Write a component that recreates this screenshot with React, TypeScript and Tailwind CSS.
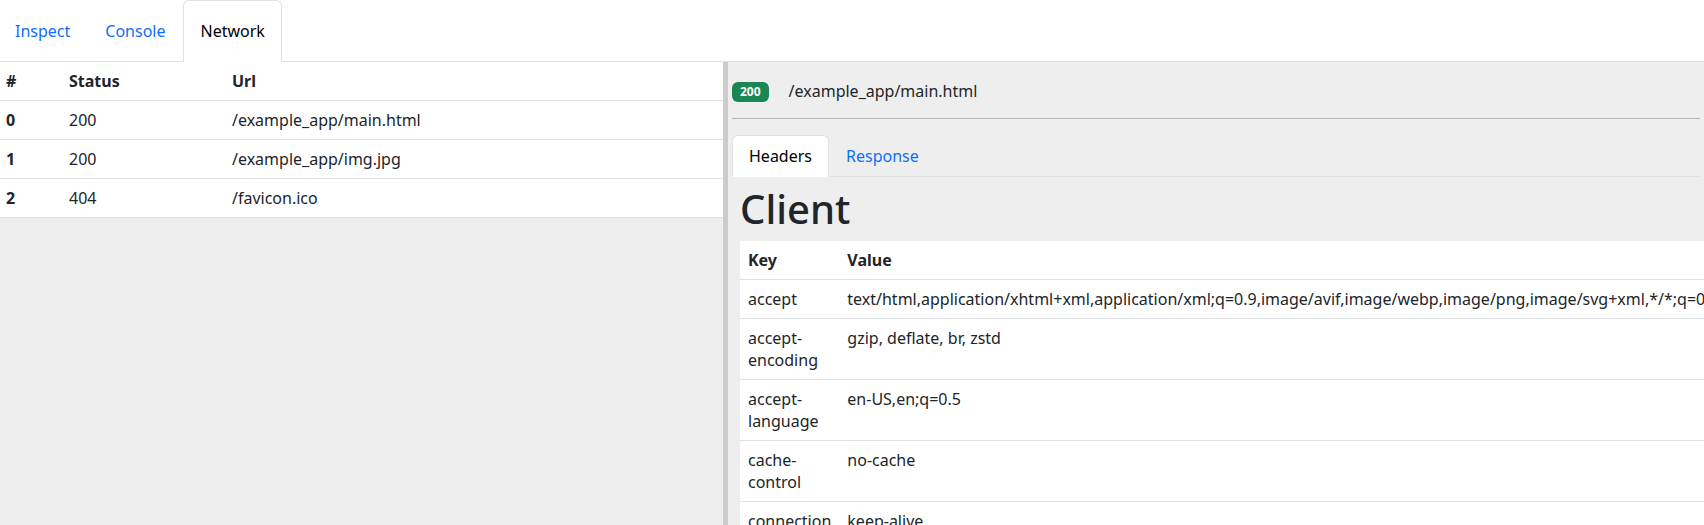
import React, { useState } from 'react';

type Request = {
  id: number;
  status: number;
  url: string;
};

const requests: Request[] = [
  { id: 0, status: 200, url: '/example_app/main.html' },
  { id: 1, status: 200, url: '/example_app/img.jpg' },
  { id: 2, status: 404, url: '/favicon.ico' },
];

const headers: [string, string][] = [
  [
    'accept',
    'text/html,application/xhtml+xml,application/xml;q=0.9,image/avif,image/webp,image/png,image/svg+xml,*/*;q=0.8',
  ],
  ['accept-encoding', 'gzip, deflate, br, zstd'],
  ['accept-language', 'en-US,en;q=0.5'],
  ['cache-control', 'no-cache'],
  ['connection', 'keep-alive'],
  ['host', 'localhost:8000'],
  ['pragma', 'no-cache'],
];

function TopTabs({ active, onSelect }: { active: string; onSelect: (t: string) => void }) {
  const tabs = ['Inspect', 'Console', 'Network'];
  return (
    <div className="flex h-[62px] shrink-0 border-b border-[#dee2e6] bg-white">
      <div className="-ml-[2px] flex gap-px">
        {tabs.map((t) => (
          <button
            key={t}
            onClick={() => onSelect(t)}
            className={`-mb-px h-[62px] rounded-t-[6px] border px-4 text-[16px] leading-[22px] ${
              active === t
                ? 'border-[#dee2e6] border-b-white bg-white text-black'
                : 'border-transparent text-[#0d6efd]'
            }`}
          >
            {t}
          </button>
        ))}
      </div>
    </div>
  );
}

function RequestList() {
  return (
    <div className="w-[723px] shrink-0 bg-[#eeeeee]">
      <table className="w-full border-collapse bg-white text-left text-[16px] leading-[22px] text-[#212529]">
        <thead>
          <tr className="border-b border-[#dee2e6]">
            <th className="w-[63px] px-[6px] py-2 font-bold">#</th>
            <th className="w-[163px] px-[6px] py-2 font-bold">Status</th>
            <th className="px-[6px] py-2 font-bold">Url</th>
          </tr>
        </thead>
        <tbody>
          {requests.map((r) => (
            <tr key={r.id} className="border-b border-[#dee2e6]">
              <th className="px-[6px] py-2 font-bold">{r.id}</th>
              <td className="px-[6px] py-2">{r.status}</td>
              <td className="px-[6px] py-2">{r.url}</td>
            </tr>
          ))}
        </tbody>
      </table>
    </div>
  );
}

function RequestDetail() {
  const [tab, setTab] = useState('Headers');
  return (
    <div className="min-w-0 flex-1 overflow-hidden bg-[#eeeeee] p-1 text-[#212529]">
      <div className="flex h-[52px] items-center gap-5">
        <span className="rounded-[6px] bg-[#198754] px-[8px] py-[4px] text-[12px] leading-[12px] font-bold text-white">
          200
        </span>
        <span className="-mt-[2px] text-[16px] leading-[22px]">/example_app/main.html</span>
      </div>
      <div className="h-px bg-[#b8b8b8]" />
      <div className="mt-[16px] flex border-b border-[#dee2e6]">
        {['Headers', 'Response'].map((t) => (
          <button
            key={t}
            onClick={() => setTab(t)}
            className={`-mb-px h-[42px] rounded-t-[6px] border px-4 text-[16px] leading-[22px] ${
              tab === t
                ? 'border-[#dee2e6] border-b-white bg-white text-black'
                : 'border-transparent text-[#0d6efd]'
            }`}
          >
            {t}
          </button>
        ))}
      </div>
      <div className="px-2 pt-2">
        <h1 className="mb-2 text-[40px] leading-[48px] font-medium text-[#212529]">Client</h1>
        <table className="border-collapse bg-white text-left text-[16px] leading-[22px]">
          <thead>
            <tr className="border-b border-[#dee2e6]">
              <th className="w-[101px] px-2 py-2 font-bold">Key</th>
              <th className="px-2 py-2 font-bold">Value</th>
            </tr>
          </thead>
          <tbody>
            {headers.map(([k, v]) => (
              <tr key={k} className="border-b border-[#dee2e6] align-top">
                <td className="w-[101px] px-2 py-2">{k}</td>
                <td className="whitespace-nowrap px-2 py-2">{v}</td>
              </tr>
            ))}
          </tbody>
        </table>
      </div>
    </div>
  );
}

export default function App() {
  const [active, setActive] = useState('Network');
  return (
    <div className="flex h-screen flex-col overflow-hidden bg-white font-['Noto_Sans',_sans-serif]">
      <TopTabs active={active} onSelect={setActive} />
      <div className="flex min-h-0 flex-1">
        <RequestList />
        <div className="w-[5px] shrink-0 bg-[#cccccc]" />
        <RequestDetail />
      </div>
    </div>
  );
}
